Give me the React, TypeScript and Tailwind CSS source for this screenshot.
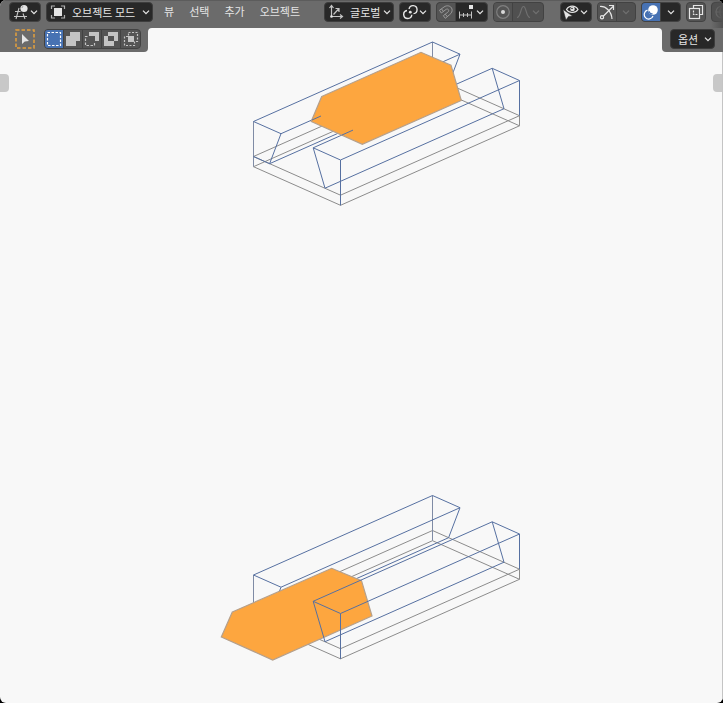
import type { ReactNode } from "react";

interface Point {
  x: number;
  y: number;
}

const BLUE = "#5670a1";
const GRAY = "#8c8c8c";

const menus = ["뷰", "선택", "추가", "오브젝트"];

function Chevron({ className = "" }: { className?: string }) {
  return (
    <svg className={`w-2 h-2 shrink-0 ${className}`} viewBox="0 0 8 8" fill="none" stroke="currentColor" strokeWidth={1.3}>
      <path d="M1 2.6 4 5.6 7 2.6" />
    </svg>
  );
}

function Icon({ children }: { children: ReactNode }) {
  return (
    <svg className="w-4 h-4 shrink-0" viewBox="0 0 16 16" fill="none" stroke="currentColor" strokeWidth={1.2}>
      {children}
    </svg>
  );
}

interface PickerProps {
  label: string;
  options: string[];
  className: string;
  icon?: ReactNode;
}

function Picker({ label, options, className, icon }: PickerProps) {
  return (
    <div className="relative shrink-0 h-5 text-[#e5e5e5]">
      {icon && <span className="absolute left-1 top-[2px] pointer-events-none">{icon}</span>}
      <select
        aria-label={label}
        className={`block h-5 appearance-none rounded border border-[#3d3d3d] bg-[#282828] text-[11px] leading-4 outline-none ${className}`}
      >
        {options.map((option) => (
          <option key={option}>{option}</option>
        ))}
      </select>
      <Chevron className="absolute right-[3px] top-[6px] pointer-events-none" />
    </div>
  );
}

interface IconButtonProps {
  label: string;
  className: string;
  children: ReactNode;
}

function IconButton({ label, className, children }: IconButtonProps) {
  return (
    <button type="button" aria-label={label} className={`flex h-full shrink-0 items-center ${className}`}>
      {children}
    </button>
  );
}

function Group({ className = "", children }: { className?: string; children: ReactNode }) {
  return (
    <div className={`flex h-5 shrink-0 overflow-hidden rounded border border-[#424242] ${className}`}>{children}</div>
  );
}

function Header() {
  return (
    <header className="relative flex h-7 items-start overflow-hidden border-t border-[#5c5c5c] bg-[#6b6b6b] pl-[9px] pt-px text-[#e5e5e5]">
      <Group className="bg-[#282828]">
        <IconButton label="에디터 유형" className="w-[30px] justify-between pl-1 pr-[3px]">
          <Icon>
            <path d="M1 7.5h5.500M0 12.5h13M5 4 2 15M9 9.5 11 15" stroke="#c4c4c4" strokeWidth={1.1} />
            <circle cx="10" cy="4.5" r="3.6" fill="currentColor" stroke="none" />
            <path d="M8 3.6a2 2 0 0 1 1.2-1.2" stroke="#777" strokeWidth={1} />
          </Icon>
          <Chevron />
        </IconButton>
      </Group>

      <div className="ml-[5px]">
        <Picker
          label="모드"
          options={["오브젝트 모드", "에디트 모드"]}
          className="w-[107px] pl-[25px]"
          icon={
            <Icon>
              <path d="M1.5 5V2H5M11 2h3.5v3M1.5 11v3H5M11 14h3.5v-3" stroke="#b0b0b0" />
              <rect x="4" y="4" width="8" height="8" fill="currentColor" stroke="none" />
            </Icon>
          }
        />
      </div>

      <nav className="ml-[11px] flex h-[18px] shrink-0 items-center gap-[15px] text-[11px] leading-4">
        {menus.map((menu) => (
          <button key={menu} type="button" className="shrink-0 whitespace-nowrap">
            {menu}
          </button>
        ))}
      </nav>

      <div className="ml-6 flex shrink-0 gap-[5px]">
        <Picker
          label="변환 오리엔테이션"
          options={["글로벌", "로컬"]}
          className="w-[70px] pl-[25px]"
          icon={
            <Icon>
              <path d="M3.5 12.5V2M1.5 4l2-2.500 2 2.500M3.5 12.5h11M12 10.5l2.500 2-2.500 2M5.500 10.500 10.500 5M7.500 4.500h3.500V8" stroke="#c4c4c4" />
              <circle cx="3.5" cy="12.5" r="1.3" fill="currentColor" stroke="none" />
            </Icon>
          }
        />
        <Group className="bg-[#282828]">
          <IconButton label="피벗 포인트 변환" className="w-[30px] justify-between pl-[3px] pr-[3px]">
            <Icon>
              <path d="M6.100 5A4 4 0 1 1 10.500 9.600M4 6.500A4.050 4.050 0 1 0 8.800 10.800" strokeWidth={1.4} />
              <circle cx="7.300" cy="8.200" r="1.400" fill="currentColor" stroke="none" />
            </Icon>
            <Chevron />
          </IconButton>
        </Group>
        <Group className="bg-[#282828]">
          <IconButton label="스냅" className="w-[19px] justify-center border-r border-[#424242] bg-[#545454] text-[#989898]">
            <Icon>
              <path d="M1.500 6.200 6 3C9 .8 13 1.800 14 5c.5 2.300-.5 4.200-2.200 5.500L7.300 14.300 5.300 11.700 9.800 8.200c2-1.600.3-4.100-1.700-2.800L3.300 9zM3.500 4.800l1.900 2.700M7.300 10.200l2 2.500" strokeWidth={1} />
            </Icon>
          </IconButton>
          <IconButton label="스냅 대상" className="w-[31px] justify-between pl-[3px] pr-[3px]">
            <Icon>
              <path d="M.5 7.500v7M4.500 9v4M8.500 9v4M12.5 7.500v7M0 11h13" stroke="#c4c4c4" strokeWidth={1} />
              <rect x="10" y="1" width="4" height="4" fill="currentColor" stroke="none" />
            </Icon>
            <Chevron />
          </IconButton>
        </Group>
        <Group className="bg-[#505050] text-[#707070]">
          <IconButton label="비례 편집" className="w-[19px] justify-center border-r border-[#424242] bg-[#545454]">
            <Icon>
              <circle cx="8" cy="8" r="6.3" stroke="#808080" />
              <circle cx="8" cy="8" r="2" fill="#d8d8d8" stroke="none" />
            </Icon>
          </IconButton>
          <IconButton label="비례 편집 감소" className="w-[30px] justify-between pl-[3px] pr-[3px]">
            <Icon>
              <path d="M1 13.5c4 0 3.5-11 6.5-11s2.5 11 6.5 11" />
            </Icon>
            <Chevron />
          </IconButton>
        </Group>
      </div>

      <div className="ml-4 flex shrink-0 gap-[5px]">
        <Group className="bg-[#282828]">
          <IconButton label="오브젝트 유형 가시성" className="w-[30px] justify-between pl-[2px] pr-[3px]">
            <Icon>
              <path d="M3.5 5.5C6 1 12.5 1 15 5.5 12.5 9.5 6 9.5 3.5 5.5Z" />
              <circle cx="9.5" cy="5" r="2.3" fill="currentColor" stroke="none" />
              <circle cx="9" cy="4.5" r=".8" fill="#282828" stroke="none" />
              <path d="M0 5.5 9.5 12 5.500 12.500 3 16Z" fill="currentColor" stroke="#282828" strokeWidth={0.5} />
            </Icon>
            <Chevron />
          </IconButton>
        </Group>
        <Group className="bg-[#505050]">
          <IconButton label="기즈모 표시" className="w-[19px] justify-center border-r border-[#424242] bg-[#545454]">
            <Icon>
              <path d="M1 2.5C7 2 12.5 7.5 13 15M4 12.5 14 2.5M10 1.5h4.500V6" />
              <circle cx="3" cy="13.2" r="1.6" />
            </Icon>
          </IconButton>
          <IconButton label="기즈모 설정" className="w-[18px] justify-center text-[#707070]">
            <Chevron />
          </IconButton>
        </Group>
        <Group className="bg-[#282828]">
          <IconButton label="오버레이 표시" className="w-[19px] justify-center border-r border-[#424242] bg-[#4772b3] text-white">
            <Icon>
              <circle cx="10" cy="6" r="4.8" fill="currentColor" stroke="none" />
              <path d="M4.500 6.200A4.500 4.500 0 1 0 10 12" />
              <path d="M6.300 7.200a2.500 2.500 0 0 0 3.200 2.500" stroke="#4772b3" />
            </Icon>
          </IconButton>
          <IconButton label="오버레이 설정" className="w-[19px] justify-center">
            <Chevron />
          </IconButton>
        </Group>
        <Group className="bg-[#545454]">
          <IconButton label="엑스레이 토글" className="w-[18px] justify-center">
            <Icon>
              <path d="M5.5 4.500v-3h9v9h-3" />
              <rect x="1.5" y="4.5" width="10" height="10" />
              <path d="M5.5 6.500v4h4" strokeDasharray="2 1" />
            </Icon>
          </IconButton>
        </Group>
        <Group className="bg-[#505050] text-[#777]">
          <IconButton label="와이어프레임" className="w-[19px] justify-center">
            <Icon>
              <circle cx="8" cy="8" r="6" />
              <path d="M2 8h12M8 2c-3 4-3 8 0 12" />
            </Icon>
          </IconButton>
        </Group>
      </div>
      <div className="pointer-events-none absolute inset-y-0 right-0 w-3 bg-linear-to-r from-transparent to-[#505050]" />
    </header>
  );
}

const selectModes = [
  {
    label: "새로운 선택",
    drawing: <rect x="1.5" y="1.5" width="13" height="13" stroke="#fff" strokeDasharray="2.5 1.5" />,
  },
  {
    label: "선택 확장",
    drawing: <path d="M5 1h10v9h-4v5H1V5h4z" fill="#c4c4c4" stroke="none" />,
  },
  {
    label: "선택 빼기",
    drawing: (
      <>
        <path d="M5 1h10v9h-4V5H5z" fill="#c4c4c4" stroke="none" />
        <path d="M3.5 5.500h-2v9h9v-3" stroke="#c4c4c4" strokeDasharray="2.5 1.5" />
      </>
    ),
  },
  {
    label: "선택 반전",
    drawing: <path d="M5 1h10v9h-4v5H1V5h4zM5 5v5h6V5z" fill="#c4c4c4" fillRule="evenodd" stroke="none" />,
  },
  {
    label: "선택 교차",
    drawing: (
      <>
        <path d="M5.5 1.5h9v9h-3v4h-10v-9h4z" stroke="#c4c4c4" strokeDasharray="2 1.5" />
        <rect x="5" y="5" width="6" height="6" fill="#c4c4c4" stroke="none" />
      </>
    ),
  },
];

function ToolSettings() {
  return (
    <div className="relative flex items-start justify-between">
      <div className="flex h-6 items-start rounded-br bg-[#6b6b6b] pl-[15px] pr-[7px] pt-px">
        <button type="button" aria-label="선택 도구" className="h-5 w-5">
          <svg className="h-5 w-5" viewBox="0 0 20 20" fill="none">
            <rect x="1" y="1" width="18" height="18" stroke="#e5a03c" strokeWidth="1.5" strokeDasharray="3.5 2" />
            <path d="M7 5v10l2.800-2.600L14 12z" fill="#e5e5e5" />
          </svg>
        </button>
        <Group className="ml-[9px] bg-[#545454]">
          {selectModes.map((mode, i) => (
            <button
              key={mode.label}
              type="button"
              aria-label={mode.label}
              aria-pressed={i === 0}
              className="flex h-full w-[19px] items-center justify-center border-r border-[#424242] last:border-r-0 aria-pressed:bg-[#4772b3]"
            >
              <Icon>{mode.drawing}</Icon>
            </button>
          ))}
        </Group>
      </div>
      {/* Rounded joins between the header and both panels */}
      <div className="flex flex-1 justify-between text-[#6b6b6b]">
        <svg className="h-1 w-1" viewBox="0 0 4 4" fill="currentColor">
          <path d="M0 0h4a4 4 0 0 0-4 4z" />
        </svg>
        <svg className="h-1 w-1" viewBox="0 0 4 4" fill="currentColor">
          <path d="M4 0H0a4 4 0 0 1 4 4z" />
        </svg>
      </div>
      <div className="flex h-6 items-start rounded-bl bg-[#6b6b6b] pl-2 pr-2 pt-px">
        <Picker label="옵션" options={["옵션"]} className="w-[45px] pl-[7px]" />
      </div>
    </div>
  );
}

function Line({ a, b, stroke = BLUE }: { a: Point; b: Point; stroke?: string }) {
  return <line x1={a.x} y1={a.y} x2={b.x} y2={b.y} stroke={stroke} strokeWidth={1} />;
}

// Front profile of the dovetail rail; the back profile is the same one moved along DEPTH.
const p = {
  a: { x: 253.5, y: 121.5 },
  b: { x: 281, y: 133.7 },
  c: { x: 269.6, y: 163.7 },
  d: { x: 313.2, y: 147.8 },
  e: { x: 340.5, y: 160 },
  f: { x: 325, y: 188.2 },
  midLeft: { x: 253.5, y: 156.5 },
  midRight: { x: 340.5, y: 195.2 },
  lowLeft: { x: 253.5, y: 166.7 },
  lowRight: { x: 340.5, y: 205.3 },
};

const DEPTH = { x: 179, y: -79.5 };

function back(point: Point): Point {
  return { x: point.x + DEPTH.x, y: point.y + DEPTH.y };
}

function LeftRail() {
  return (
    <g>
      <Line a={p.midLeft} b={back(p.midLeft)} stroke={GRAY} />
      <Line a={p.lowLeft} b={back(p.lowLeft)} stroke={GRAY} />
      <Line a={p.midLeft} b={p.midRight} stroke={GRAY} />
      <Line a={p.lowLeft} b={p.lowRight} stroke={GRAY} />
      <Line a={back(p.midLeft)} b={back(p.midRight)} stroke={GRAY} />
      <Line a={back(p.lowLeft)} b={back(p.lowRight)} stroke={GRAY} />
      <Line a={p.a} b={p.lowLeft} stroke="#7f8ba5" />
      <Line a={back(p.a)} b={back(p.lowLeft)} stroke="#7f8ba5" />
      <Line a={p.a} b={p.b} />
      <Line a={p.b} b={p.c} />
      <Line a={p.midLeft} b={p.c} />
      <Line a={back(p.a)} b={back(p.b)} />
      <Line a={back(p.b)} b={back(p.c)} />
      <Line a={p.a} b={back(p.a)} />
      <Line a={p.b} b={back(p.b)} />
      <Line a={p.c} b={back(p.c)} />
    </g>
  );
}

function RightRail() {
  return (
    <g>
      <Line a={p.midRight} b={back(p.midRight)} stroke={GRAY} />
      <Line a={p.lowRight} b={back(p.lowRight)} stroke={GRAY} />
      <Line a={p.midRight} b={p.lowRight} stroke={GRAY} />
      <Line a={back(p.midRight)} b={back(p.lowRight)} stroke={GRAY} />
      <Line a={p.d} b={p.e} />
      <Line a={p.d} b={p.f} />
      <Line a={p.e} b={p.lowRight} />
      <Line a={back(p.d)} b={back(p.e)} />
      <Line a={back(p.d)} b={back(p.f)} />
      <Line a={back(p.e)} b={back(p.midRight)} />
      <Line a={p.d} b={back(p.d)} />
      <Line a={p.e} b={back(p.e)} />
      <Line a={p.f} b={back(p.f)} />
    </g>
  );
}

function Slider({ points }: { points: string }) {
  return <polygon points={points} fill="#fda63f" stroke="#b5a08c" strokeWidth={1.2} />;
}

function Viewport() {
  return (
    <svg className="absolute inset-0 h-full w-full" role="img" aria-label="3D 뷰포트">
      <g>
        <LeftRail />
        <RightRail />
        <Slider points="321.7,96.5 421,52.3 451,65.2 461.3,100.5 362.3,144.3 311.2,121.5" />
        {/* Rail edges that still lie in front of the slider */}
        <Line a={{ x: 312, y: 120 }} b={{ x: 321, y: 116 }} />
        <Line a={{ x: 341.8, y: 135.1 }} b={{ x: 353, y: 130.1 }} />
      </g>
      <g transform="translate(0 453.5)">
        <LeftRail />
        <Slider points="232.3,158.5 331.7,114.8 361.5,127.2 372,162.5 272.7,206.5 221.3,183.5" />
        <RightRail />
      </g>
    </svg>
  );
}

export default function App() {
  return (
    <div className="min-h-screen bg-black font-['Noto_Sans_CJK_KR',sans-serif]">
      <div className="relative flex min-h-screen flex-col overflow-hidden rounded-md bg-[#f8f8f8] text-[#e5e5e5]">
        <Viewport />
        <Header />
        <ToolSettings />
        <div className="relative flex flex-1 items-start justify-between border-r border-[#c4c4c4] pt-[22px]">
          <button type="button" aria-label="도구 모음 열기" className="h-[18px] w-[9px] rounded-r bg-[#c8c8c8]" />
          <button type="button" aria-label="사이드바 열기" className="h-[18px] w-[9px] rounded-l bg-[#c8c8c8]" />
        </div>
      </div>
    </div>
  );
}
